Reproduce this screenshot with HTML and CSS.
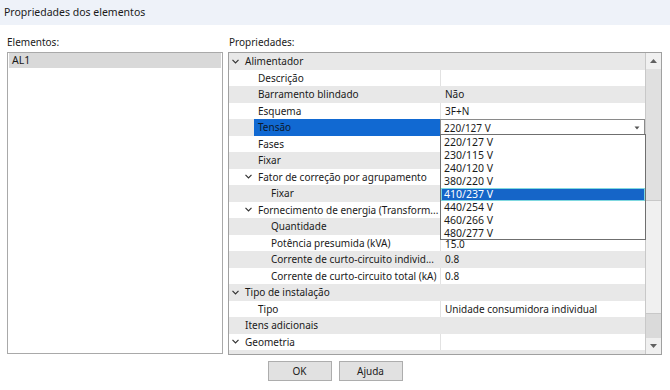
FILE: index.html
```html
<!DOCTYPE html>
<html lang="pt">
<head>
<meta charset="utf-8">
<title>Propriedades dos elementos</title>
<link rel="stylesheet" href="styles.css">
</head>
<body>
<div class="dialog">
  <div class="titlebar">Propriedades dos elementos</div>
  <div class="main">
    <div class="col-left">
      <div class="label">Elementos:</div>
      <div class="listbox">
        <div class="list-item selected">AL1</div>
      </div>
    </div>
    <div class="col-right">
      <div class="label">Propriedades:</div>
      <div class="grid">
        <div class="rows">
          <div class="row cat"><div class="name lvl0"><span class="chev"><svg width="7" height="5" viewBox="0 0 7 5"><polyline points="0.5,0.8 3.5,3.8 6.5,0.8" fill="none" stroke="#333" stroke-width="1.2"/></svg></span><span class="text">Alimentador</span></div><div class="value"></div></div>
          <div class="row"><div class="name lvl1"><span class="chev"></span><span class="text">Descrição</span></div><div class="value"></div></div>
          <div class="row"><div class="name lvl1"><span class="chev"></span><span class="text">Barramento blindado</span></div><div class="value">Não</div></div>
          <div class="row"><div class="name lvl1"><span class="chev"></span><span class="text">Esquema</span></div><div class="value">3F+N</div></div>
          <div class="row sel"><div class="name lvl1"><span class="chev"></span><span class="text">Tensão</span></div><div class="value combo-cell"><div class="combo"><span>220/127 V</span><svg width="6" height="4" viewBox="0 0 6 4"><polygon points="0.5,0.5 5.5,0.5 3,3.5" fill="#555"/></svg></div></div></div>
          <div class="row"><div class="name lvl1"><span class="chev"></span><span class="text">Fases</span></div><div class="value"></div></div>
          <div class="row"><div class="name lvl1"><span class="chev"></span><span class="text">Fixar</span></div><div class="value"></div></div>
          <div class="row"><div class="name lvl1"><span class="chev"><svg width="7" height="5" viewBox="0 0 7 5"><polyline points="0.5,0.8 3.5,3.8 6.5,0.8" fill="none" stroke="#333" stroke-width="1.2"/></svg></span><span class="text">Fator de correção por agrupamento</span></div><div class="value"></div></div>
          <div class="row"><div class="name lvl2"><span class="chev"></span><span class="text">Fixar</span></div><div class="value"></div></div>
          <div class="row"><div class="name lvl1"><span class="chev"><svg width="7" height="5" viewBox="0 0 7 5"><polyline points="0.5,0.8 3.5,3.8 6.5,0.8" fill="none" stroke="#333" stroke-width="1.2"/></svg></span><span class="text">Fornecimento de energia (Transform...</span></div><div class="value"></div></div>
          <div class="row"><div class="name lvl2"><span class="chev"></span><span class="text">Quantidade</span></div><div class="value"></div></div>
          <div class="row"><div class="name lvl2"><span class="chev"></span><span class="text">Potência presumida (kVA)</span></div><div class="value low">15.0</div></div>
          <div class="row"><div class="name lvl2"><span class="chev"></span><span class="text">Corrente de curto-circuito individ...</span></div><div class="value">0.8</div></div>
          <div class="row"><div class="name lvl2"><span class="chev"></span><span class="text">Corrente de curto-circuito total (kA)</span></div><div class="value">0.8</div></div>
          <div class="row cat"><div class="name lvl0"><span class="chev"><svg width="7" height="5" viewBox="0 0 7 5"><polyline points="0.5,0.8 3.5,3.8 6.5,0.8" fill="none" stroke="#333" stroke-width="1.2"/></svg></span><span class="text">Tipo de instalação</span></div><div class="value"></div></div>
          <div class="row"><div class="name lvl1"><span class="chev"></span><span class="text">Tipo</span></div><div class="value">Unidade consumidora individual</div></div>
          <div class="row cat"><div class="name lvl0"><span class="chev"></span><span class="text">Itens adicionais</span></div><div class="value"></div></div>
          <div class="row cat"><div class="name lvl0"><span class="chev"><svg width="7" height="5" viewBox="0 0 7 5"><polyline points="0.5,0.8 3.5,3.8 6.5,0.8" fill="none" stroke="#333" stroke-width="1.2"/></svg></span><span class="text">Geometria</span></div><div class="value"></div></div>
          <div class="row"><div class="name lvl0"><span class="chev"></span><span class="text"></span></div><div class="value"></div></div>
        </div>
        <div class="scrollbar">
          <div class="sb-btn"><svg width="7" height="4" viewBox="0 0 7 4"><polygon points="0,4 7,4 3.5,0" fill="#606060"/></svg></div>
          <div class="sb-track top"></div>
          <div class="sb-thumb"></div>
          <div class="sb-track"></div>
          <div class="sb-btn"><svg width="7" height="4" viewBox="0 0 7 4"><polygon points="0,0 7,0 3.5,4" fill="#606060"/></svg></div>
        </div>
        <div class="dropdown">
          <div class="dd-item">220/127 V</div>
          <div class="dd-item">230/115 V</div>
          <div class="dd-item">240/120 V</div>
          <div class="dd-item">380/220 V</div>
          <div class="dd-item active">410/237 V</div>
          <div class="dd-item">440/254 V</div>
          <div class="dd-item">460/266 V</div>
          <div class="dd-item">480/277 V</div>
        </div>
      </div>
    </div>
  </div>
  <div class="buttons">
    <button class="btn">OK</button>
    <button class="btn">Ajuda</button>
  </div>
</div>
</body>
</html>
```

FILE: styles.css
```css
* { box-sizing: border-box; }
html, body {
  margin: 0;
  padding: 0;
  background: #ffffff;
}
body {
  width: 670px;
  height: 390px;
  overflow: hidden;
  font-family: "Segoe UI", "Noto Sans", "Open Sans", sans-serif;
  font-size: 10px;
  color: #1a1a1a;
}
.dialog {
  width: 670px;
  height: 390px;
  display: flex;
  flex-direction: column;
}
.titlebar {
  height: 25px;
  line-height: 25px;
  padding-left: 4px;
  background: #eef2f9;
  font-size: 10.5px;
  color: #1a1a1a;
}
.main {
  display: flex;
  padding: 9px 0 0 7px;
  gap: 5px;
}
.label {
  height: 16px;
  line-height: 16px;
  margin-bottom: 2px;
}
.col-left {
  width: 216px;
}
.col-right {
  width: 434px;
}
.col-right .label {
  padding-left: 1px;
}
.listbox {
  height: 302px;
  border: 1px solid #a9a9a9;
  padding: 0 1px;
  background: #fff;
}
.list-item {
  height: 15px;
  line-height: 15px;
  padding-left: 3px;
  font-size: 10.5px;
}
.list-item.selected {
  background: #d9d9d9;
}
.grid {
  position: relative;
  height: 303px;
  border: 1px solid #a0a0a0;
  display: flex;
  overflow: hidden;
  background: #fff;
}
.rows {
  width: 416px;
  overflow: hidden;
}
.row {
  height: 16.5px;
  display: flex;
  align-items: center;
  background: #fff;
}
.row:nth-child(odd) {
  background: #e8e8e8;
}
.name {
  width: 211px;
  height: 100%;
  display: flex;
  align-items: center;
  white-space: nowrap;
  overflow: hidden;
}
.name.lvl0 { padding-left: 3px; }
.name.lvl1 { padding-left: 16px; }
.name.lvl2 { padding-left: 29px; }
.chev {
  width: 13px;
  flex: none;
  display: flex;
  align-items: center;
}
.text {
  flex: 1;
  height: 100%;
  display: flex;
  align-items: center;
}
.row.sel .text {
  background: #1169d2;
  margin-left: -4px;
  padding-left: 4px;
  color: #0d1a2e;
}
.value {
  flex: 1;
  height: 100%;
  display: flex;
  align-items: center;
  padding-left: 4px;
  border-left: 1px solid #e2e2e2;
  white-space: nowrap;
}
.value.low {
  align-items: flex-end;
  padding-bottom: 1px;
  line-height: 11px;
}
.row:nth-child(odd) .value { border-left-color: #e8e8e8; }
.combo-cell {
  padding: 0;
  background: #fff;
  border-left: none;
}
.combo {
  width: 100%;
  height: 100%;
  border: 1px solid #8a8a8a;
  border-bottom: none;
  display: flex;
  align-items: center;
  justify-content: space-between;
  padding: 0 4px 0 3px;
  background: #fff;
}
.scrollbar {
  width: 16px;
  border-left: 1px solid #c8c8c8;
  display: flex;
  flex-direction: column;
  background: #e3e3e3;
}
.sb-btn {
  height: 16px;
  flex: none;
  display: flex;
  align-items: center;
  justify-content: center;
  background: #f0f0f0;
}
.sb-track.top {
  height: 131px;
  flex: none;
  background: #e0e0e0;
}
.sb-thumb {
  height: 114px;
  flex: none;
  background: #f0f0f0;
  border-top: 1px solid #c8c8c8;
  border-bottom: 1px solid #c8c8c8;
}
.sb-track {
  flex: 1;
  background: #dadada;
}
.dropdown {
  position: absolute;
  left: 211px;
  top: 81px;
  width: 206px;
  height: 106px;
  border: 1px solid #6f6f6f;
  background: #fff;
  padding-top: 1px;
}
.dd-item {
  height: 13px;
  line-height: 13px;
  padding-left: 3px;
  font-size: 10.5px;
}
.dd-item.active {
  background: #1565c8;
  color: #fff;
  outline: 1px solid #7fd8e0;
  outline-offset: -1px;
}
.buttons {
  display: flex;
  justify-content: center;
  gap: 7px;
  margin-top: 6px;
}
.btn {
  width: 64px;
  height: 20px;
  background: #e1e1e1;
  border: 1px solid #adadad;
  font-family: inherit;
  font-size: 10px;
  color: #1a1a1a;
  padding: 0;
}
```
